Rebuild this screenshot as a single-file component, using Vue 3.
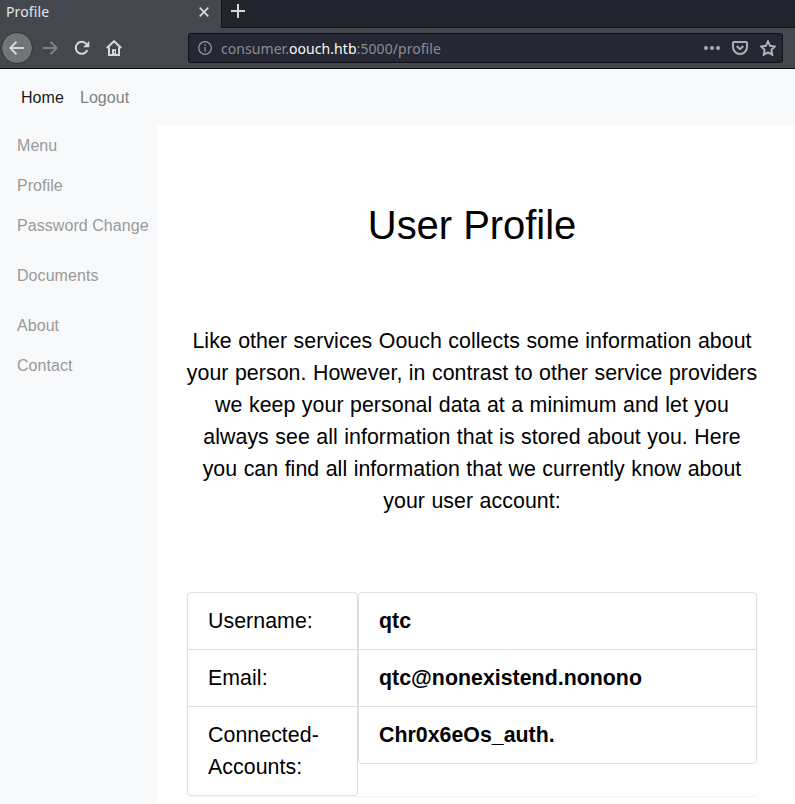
<script setup>
const sections = [
  ['Menu', 'Profile', 'Password Change'],
  ['Documents'],
  ['About', 'Contact'],
]
const labels = ['Username:', 'Email:', 'Connected-Accounts:']
const values = ['qtc', 'qtc@nonexistend.nonono', 'Chr0x6eOs_auth.']
</script>

<template>
  <div class="window">
    <header class="chrome">
      <div class="tabs">
        <div class="tab">
          <span class="tab-title">Profile</span>
          <svg class="close" width="12" height="12" viewBox="0 0 12 12"><path d="M1.7 1.7 10.3 10.3M10.3 1.7 1.7 10.3" /></svg>
        </div>
        <div class="tab-strip">
          <svg width="14" height="14" viewBox="0 0 14 14"><path d="M7 0V14M0 7H14" /></svg>
        </div>
      </div>
      <div class="toolbar">
        <div class="back">
          <svg width="16" height="16" viewBox="0 0 16 16"><path d="M15 8H1.5M7.5 1.8 1.3 8l6.2 6.2" /></svg>
        </div>
        <svg class="forward" width="16" height="16" viewBox="0 0 16 16"><path d="M1 8h13.5M8.5 1.8 14.7 8l-6.2 6.2" /></svg>
        <svg class="reload" width="16" height="16" viewBox="0 0 16 16"><path d="M13.3 10.2A6 6 0 1 1 12.4 4" /><path class="solid" d="M15.3 1v6.2H9.1z" /></svg>
        <svg class="home" width="16" height="16" viewBox="0 0 16 16"><path d="M.8 8 8 1.2 15.2 8M3 7.2V15h10V7.2" /><path class="solid" d="M6 9.2h4V15H6z" /><path class="knob" d="M8 11h1v2H8z" /></svg>
        <div class="address">
          <svg class="info" width="14" height="14" viewBox="0 0 14 14"><circle cx="7" cy="7" r="6.3" /><path d="M7 6v4.5M7 3.3v1.6" /></svg>
          <span class="url">consumer.<b>oouch.htb</b>:5000/profile</span>
          <svg class="dots" width="16" height="16" viewBox="0 0 16 16"><circle cx="2" cy="8" r="2" /><circle cx="8" cy="8" r="2" /><circle cx="14" cy="8" r="2" /></svg>
          <svg class="pocket" width="16" height="16" viewBox="0 0 16 16"><path d="M2 2h12a1 1 0 0 1 1 1v4a7 7 0 0 1-14 0V3a1 1 0 0 1 1-1z" /><path d="M4.7 6 8 9.2 11.3 6" /></svg>
          <svg class="star" width="16" height="16" viewBox="0 0 16 16"><path d="m8 1.3 2.1 4.5 4.8.7-3.5 3.4.8 4.8L8 12.4l-4.2 2.3.8-4.8L1.1 6.5l4.8-.7z" /></svg>
        </div>
      </div>
    </header>

    <nav class="navbar">
      <a class="active">Home</a>
      <a>Logout</a>
    </nav>

    <div class="body">
      <aside class="sidebar">
        <div v-for="(group, i) in sections" :key="i" class="group">
          <a v-for="item in group" :key="item">{{ item }}</a>
        </div>
      </aside>
      <main class="content">
        <h1>User Profile</h1>
        <p>
          Like other services Oouch collects some information about your person. However, in contrast to other service providers we keep your personal data at a minimum and let you always see all information that is stored about you. Here you can find all information that we currently know about your user account:
        </p>
        <div class="account">
          <ul class="labels">
            <li v-for="label in labels" :key="label">{{ label }}</li>
          </ul>
          <ul class="values">
            <li v-for="value in values" :key="value">{{ value }}</li>
          </ul>
        </div>
      </main>
    </div>
  </div>
</template>

<style>
body {
  background: #fff;
  overflow: hidden;
}
</style>

<style scoped>
* {
  box-sizing: border-box;
}
.window {
  display: flex;
  flex-direction: column;
  height: 804px;
  overflow: hidden;
  font: 16px/24px "Liberation Sans", Arial, sans-serif;
  color: #000;
}
svg {
  display: block;
  flex: none;
  fill: none;
  stroke: #d7d8d8;
  stroke-width: 2;
}
.chrome {
  flex: none;
  height: 69px;
  background: #44474d;
  border-bottom: 1px solid #0c0c0d;
  font-family: "Noto Sans", sans-serif;
  font-size: 14px;
}
.tabs {
  display: flex;
  height: 28px;
}
.tab {
  display: flex;
  justify-content: space-between;
  width: 221px;
  padding: 0 11px 0 6px;
  color: #e6e6e4;
}
.tab-title {
  letter-spacing: 0.12px;
}
.close {
  margin-top: 6px;
  stroke-width: 1.7;
}
.tab-strip {
  flex: 1;
  padding: 4px 0 0 9px;
  background: #23252e;
  border-left: 1px solid #121319;
  border-bottom: 1px solid #121319;
}
.toolbar {
  display: flex;
  align-items: center;
  height: 40px;
  padding: 0 11px 0 1px;
}
.back {
  display: grid;
  place-items: center;
  width: 32px;
  height: 32px;
  border: 1px solid #303238;
  border-radius: 50%;
  background: #737477;
}
.forward {
  margin-left: 9px;
  stroke: #808287;
}
.reload {
  margin-left: 16px;
}
.home {
  margin-left: 16px;
}
.solid {
  fill: #d7d8d8;
  stroke: none;
}
.knob {
  fill: #44474d;
  stroke: none;
}
.address {
  display: flex;
  align-items: center;
  width: 595px;
  height: 30px;
  margin-left: 66px;
  padding: 0 6px 0 9px;
  border: 1px solid #101117;
  border-radius: 3px;
  background: #252733;
  color: #8c8d91;
}
.address svg {
  stroke: #b0b1b4;
}
.address .info {
  stroke: #9b9ca0;
  stroke-width: 1.2;
}
.url {
  flex: 1;
  margin-left: 9px;
  padding-top: 2px;
  letter-spacing: 0.06px;
  white-space: nowrap;
}
.url b {
  font-weight: 400;
  color: #fafafa;
}
.address .dots {
  fill: #b0b1b4;
  stroke: none;
}
.pocket {
  margin-left: 12px;
}
.star {
  margin-left: 12px;
}
.navbar {
  display: flex;
  flex: none;
  gap: 16px;
  height: 56px;
  padding: 17px 21px 15px;
  background: #f8f9fb;
  letter-spacing: 0.06px;
}
.navbar a {
  color: #808182;
}
.navbar .active {
  color: #191919;
}
.body {
  display: flex;
  flex: 1;
  min-height: 0;
}
.sidebar {
  display: flex;
  flex: none;
  flex-direction: column;
  gap: 10px;
  width: 157px;
  background: #f8f9fb;
  letter-spacing: 0.06px;
}
.sidebar a {
  display: block;
  height: 40px;
  padding: 9px 0 7px 17px;
  color: #999;
  white-space: nowrap;
}
.content {
  width: 631px;
  padding: 76px 31px 0 30px;
  font-size: 21.333px;
  line-height: 32px;
}
h1 {
  margin: 0;
  font-size: 40px;
  font-weight: 400;
  line-height: 48px;
  text-align: center;
  letter-spacing: -0.05px;
}
p {
  margin: 76px -5px 75px;
  padding: 0 4px;
  text-align: center;
  letter-spacing: 0.07px;
  word-spacing: 0.4px;
}
.account {
  display: flex;
  align-items: flex-start;
  border-radius: 4px;
  box-shadow: 0 1px 2px rgba(0, 0, 0, 0.06);
}
ul {
  margin: 0;
  padding: 0;
  border: 1px solid #dfdfdf;
  border-radius: 4px;
  list-style: none;
}
li {
  padding: 12px 20px;
}
li + li {
  border-top: 1px solid #dfdfdf;
}
.labels {
  width: 171px;
  letter-spacing: 0.06px;
}
.values {
  flex: 1;
  font-weight: 700;
  letter-spacing: 0.02px;
}
</style>
